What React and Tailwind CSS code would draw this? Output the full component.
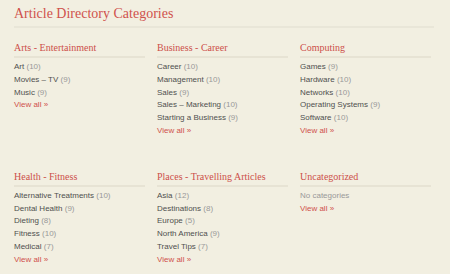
import React from 'react';

const groups = [
    {
        title: 'Arts - Entertainment',
        items: [['Art', 10], ['Movies – TV', 9], ['Music', 9]],
    },
    {
        title: 'Business - Career',
        items: [['Career', 10], ['Management', 10], ['Sales', 9], ['Sales – Marketing', 10], ['Starting a Business', 9]],
    },
    {
        title: 'Computing',
        items: [['Games', 9], ['Hardware', 10], ['Networks', 10], ['Operating Systems', 9], ['Software', 10]],
    },
    {
        title: 'Health - Fitness',
        items: [['Alternative Treatments', 10], ['Dental Health', 9], ['Dieting', 8], ['Fitness', 10], ['Medical', 7]],
    },
    {
        title: 'Places - Travelling Articles',
        items: [['Asia', 12], ['Destinations', 8], ['Europe', 5], ['North America', 9], ['Travel Tips', 7]],
    },
    {
        title: 'Uncategorized',
        items: [],
    },
];

const serif = "font-['Georgia','Liberation_Serif',serif]";

const Group = ({ group }) => (
    <div>
        <h3 className={`${serif} text-[10px] leading-[12px] text-[#cd4f4a] pb-[2px] border-b-2 border-[#e7e3d4]`}>
            {group.title}
        </h3>
        <ul className="mt-[3px] text-[8px] leading-[12.8px]">
            {group.items.length === 0 && <li className="text-[#999]">No categories</li>}
            {group.items.map(([name, count]) => (
                <li key={name} className="text-[#4f4f4f]">
                    {name} <span className="text-[#999]">({count})</span>
                </li>
            ))}
            <li className="text-[#d0524d]">View all »</li>
        </ul>
    </div>
);

export default function App() {
    return (
        <div className="w-[450px] h-[274px] bg-[#f2efe1] px-[14px] pt-[6px] font-['Liberation_Sans',Arial,sans-serif] overflow-hidden">
            <h2 className={`${serif} text-[14px] leading-[16px] text-[#d0524d] pb-[4px] border-b-2 border-[#e9e6d8] w-[420px]`}>
                Article Directory Categories
            </h2>
            <div className="mt-[14px] grid grid-cols-[131px_131px_131px] gap-x-[12px] gap-y-[33px]">
                {groups.map(g => <Group key={g.title} group={g} />)}
            </div>
        </div>
    );
}
